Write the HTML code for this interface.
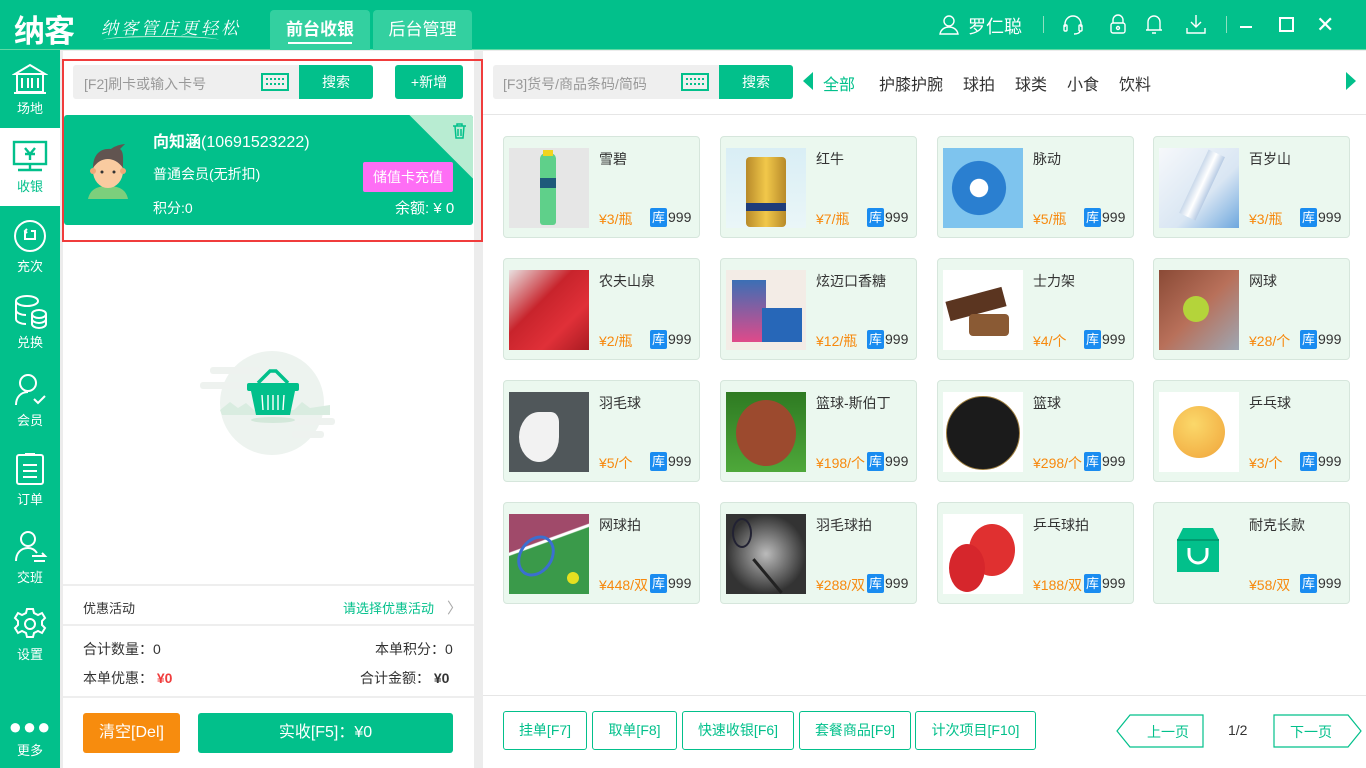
<!DOCTYPE html>
<html><head><meta charset="utf-8"><style>
*{margin:0;padding:0;box-sizing:border-box}
body{width:1366px;height:768px;overflow:hidden;font-family:"Liberation Sans","Noto Sans CJK SC",sans-serif;background:#ececec;position:relative;font-size:14px;color:#333}
.abs{position:absolute}
.top{left:0;top:0;width:1366px;height:50px;background:#02c08b;border-bottom:1px solid #5fd9a4}
.side{left:0;top:50px;width:60px;height:718px;background:#02c08b}
.nav{position:absolute;left:0;width:60px;text-align:center;color:#fff;font-size:13px}
.nav svg{display:block;margin:0 auto 2px}
.left{left:63px;top:51px;width:411px;height:717px;background:#fff}
.right{left:483px;top:51px;width:883px;height:717px;background:#fff}
.btn{position:absolute;background:#02c08b;color:#fff;text-align:center;border-radius:3px}
.card{position:absolute;width:197px;height:102px;background:#ebf8ef;border:1px solid #d6e6dc;border-radius:4px}
.card .img{position:absolute;left:5px;top:11px;width:80px;height:80px;overflow:hidden}
.card .nm{position:absolute;left:95px;top:12px;font-size:14px;color:#333}
.card .pr{position:absolute;left:95px;top:72px;font-size:14px;color:#f7890e}
.card .ku{position:absolute;left:146px;top:71px;width:17px;height:19px;background:#1a8cf0;color:#fff;font-size:13px;text-align:center;line-height:19px;border-radius:2px}
.card .st{position:absolute;left:164px;top:72px;font-size:14px;color:#333}
.bb{position:absolute;top:711px;height:39px;border:1px solid #02c08b;border-radius:3px;color:#02c08b;font-size:14px;text-align:center;line-height:37px;background:#fff}
.cat{position:absolute;top:71px;font-size:16px;color:#333}
</style></head><body>
<div class="abs top"></div>
<div class="abs" style="left:14px;top:6px;font-size:31px;font-weight:bold;color:#fff;letter-spacing:-1px">纳客</div>
<div class="abs" style="left:101px;top:14px;font-size:17px;color:#fff;font-style:italic;letter-spacing:3px;font-family:'Liberation Serif','Noto Serif CJK SC',serif">纳客管店更轻松</div>
<div class="abs" style="left:103px;top:36px;width:116px;height:8px;border-top:1px solid #c9f0e0;border-radius:50% 50% 0 0"></div>
<div class="abs" style="left:270px;top:10px;width:100px;height:40px;background:#33d0a0;border-radius:4px 4px 0 0;color:#fff;font-size:17px;font-weight:bold;text-align:center;line-height:40px">前台收银</div>
<div class="abs" style="left:288px;top:42px;width:64px;height:2px;background:#fff"></div>
<div class="abs" style="left:373px;top:10px;width:99px;height:40px;background:#33d0a0;border-radius:4px 4px 0 0;color:#fff;font-size:17px;text-align:center;line-height:40px">后台管理</div>
<svg class="abs" style="left:938px;top:14px" width="22" height="22" viewBox="0 0 22 22" fill="none" stroke="#fff" stroke-width="1.4"><circle cx="11" cy="7" r="5"/><path d="M2 20c1-5 5-7 9-7s8 2 9 7z"/></svg>
<div class="abs" style="left:968px;top:13px;color:#fff;font-size:18px">罗仁聪</div>
<div class="abs" style="left:1043px;top:16px;width:1px;height:17px;background:#8ee0c0"></div>
<svg class="abs" style="left:1062px;top:14px" width="22" height="22" viewBox="0 0 22 22" fill="none" stroke="#fff" stroke-width="1.4"><path d="M3 13V10a8 8 0 0116 0v3"/><rect x="2" y="11" width="3" height="6" rx="1"/><rect x="17" y="11" width="3" height="6" rx="1"/><path d="M18 17c0 2-3 3-6 3"/></svg>
<svg class="abs" style="left:1108px;top:13px" width="20" height="22" viewBox="0 0 20 22" fill="none" stroke="#fff" stroke-width="1.4"><path d="M5 10V7a5 5 0 0110 0v3"/><rect x="3" y="10" width="14" height="10" rx="2"/><circle cx="10" cy="15" r="1.5"/></svg>
<svg class="abs" style="left:1145px;top:13px" width="18" height="22" viewBox="0 0 18 22" fill="none" stroke="#fff" stroke-width="1.4"><path d="M3 17V9a6 6 0 0112 0v8zM1 17h16M7 20h4"/></svg>
<svg class="abs" style="left:1185px;top:13px" width="22" height="22" viewBox="0 0 22 22" fill="none" stroke="#fff" stroke-width="1.4"><path d="M11 2v12M6 9l5 5 5-5M2 15v5h18v-5"/></svg>
<div class="abs" style="left:1226px;top:16px;width:1px;height:17px;background:#8ee0c0"></div>
<div class="abs" style="left:1240px;top:26px;width:12px;height:2px;background:#fff"></div>
<div class="abs" style="left:1279px;top:17px;width:15px;height:15px;border:2px solid #fff"></div>
<div class="abs" style="left:1316px;top:12px;color:#fff;font-size:22px">✕</div>

<div class="abs side"></div>
<div class="nav" style="top:62px"><svg width="36" height="34" viewBox="0 0 36 34" fill="none" stroke="#fff" stroke-width="2"><path d="M3 12 18 3l15 9zM5 12v18h26V12M2 31h32M10 16v10M16 16v10M20 16v10M26 16v10"/></svg>场地</div>
<div class="abs" style="left:0;top:128px;width:60px;height:78px;background:#fff"></div>
<div class="nav" style="top:140px;color:#02c08b"><svg width="36" height="34" viewBox="0 0 36 34" fill="none" stroke="#02c08b" stroke-width="2.4"><rect x="2" y="2" width="32" height="22"/><path d="M18 24v6M6 30h24M13 8l5 6 5-6M13 14h10M18 14v6"/></svg>收银</div>
<div class="nav" style="top:218px"><svg width="36" height="36" viewBox="0 0 36 36" fill="none" stroke="#fff" stroke-width="2"><circle cx="18" cy="18" r="15"/><path d="M13 13v8h10v-8h-4M15 11l-2 2 2 2"/></svg>充次</div>
<div class="nav" style="top:294px"><svg width="36" height="36" viewBox="0 0 36 36" fill="none" stroke="#fff" stroke-width="2"><ellipse cx="15" cy="7" rx="11" ry="5"/><path d="M4 7v18c0 3 5 5 10 5M4 16c0 3 5 5 10 5"/><ellipse cx="27" cy="20" rx="7" ry="4"/><path d="M20 20v10c0 2 3 4 7 4s7-2 7-4V20M20 25c0 2 3 4 7 4s7-2 7-4"/></svg>兑换</div>
<div class="nav" style="top:372px"><svg width="36" height="36" viewBox="0 0 36 36" fill="none" stroke="#fff" stroke-width="2"><circle cx="16" cy="11" r="8"/><path d="M4 33c0-8 5-13 12-13M22 27l4 4 7-7"/></svg>会员</div>
<div class="nav" style="top:451px"><svg width="36" height="36" viewBox="0 0 36 36" fill="none" stroke="#fff" stroke-width="2"><rect x="5" y="4" width="26" height="29" rx="2"/><path d="M13 3h10M11 14h14M11 20h14M11 26h14"/></svg>订单</div>
<div class="nav" style="top:529px"><svg width="36" height="36" viewBox="0 0 36 36" fill="none" stroke="#fff" stroke-width="2"><circle cx="16" cy="10" r="7"/><path d="M4 32c0-8 5-13 12-13 4 0 7 2 9 5M20 27h13l-3-3M22 32h11"/></svg>交班</div>
<div class="nav" style="top:606px"><svg width="36" height="36" viewBox="0 0 36 36" fill="none" stroke="#fff" stroke-width="2"><path d="M15 3h6l1 4 4 2 4-2 3 5-3 3v4l3 3-3 5-4-2-4 2-1 4h-6l-1-4-4-2-4 2-3-5 3-3v-4L3 12l3-5 4 2 4-2z"/><circle cx="18" cy="18" r="5"/></svg>设置</div>
<div class="nav" style="top:722px"><div style="font-size:22px;line-height:10px;letter-spacing:1px">●●●</div><div style="margin-top:8px">更多</div></div>

<div class="abs left"></div>
<div class="abs" style="left:62px;top:59px;width:421px;height:183px;border:2px solid #f03c3c"></div>
<div class="abs" style="left:73px;top:65px;width:226px;height:34px;background:#efefef;border-radius:3px 0 0 3px"></div>
<div class="abs" style="left:84px;top:74px;color:#999;font-size:14px">[F2]刷卡或输入卡号</div>
<svg class="abs" style="left:261px;top:73px" width="28" height="18" viewBox="0 0 28 18" fill="none" stroke="#02c08b" stroke-width="2"><rect x="1" y="1" width="26" height="16"/><path d="M5 6h18M5 11h18" stroke-dasharray="2 2"/></svg>
<div class="btn" style="left:299px;top:65px;width:74px;height:34px;line-height:34px;border-radius:0 3px 3px 0">搜索</div>
<div class="btn" style="left:395px;top:65px;width:68px;height:34px;line-height:34px">+新增</div>
<div class="abs" style="left:64px;top:115px;width:409px;height:110px;background:#02c08b;border-radius:3px;overflow:hidden">
 <div style="position:absolute;right:-45px;top:-45px;width:90px;height:90px;background:#b8ecd2;transform:rotate(45deg)"></div>
</div>
<svg class="abs" style="left:452px;top:123px" width="15" height="16" viewBox="0 0 15 16" fill="none" stroke="#02c08b" stroke-width="1.5"><path d="M1 3h13M5 3V1h5v2M3 3l1 12h7l1-12M6 6v7M9 6v7"/></svg>
<svg class="abs" style="left:86px;top:141px" width="44" height="58" viewBox="0 0 44 58"><path d="M2 58c2-10 10-13 20-13s18 3 20 13z" fill="#7ccf7c"/><ellipse cx="22" cy="30" rx="15" ry="17" fill="#f9cba0"/><circle cx="7" cy="30" r="3" fill="#f0a878"/><circle cx="37" cy="30" r="3" fill="#f0a878"/><path d="M7 27c0-14 8-20 18-19 5-4 13-5 14-5-2 2-4 4-5 5 4 3 3 10 3 19-4-6-10-9-15-9-6 0-11 3-15 9z" fill="#615450"/><circle cx="16" cy="31" r="1.5" fill="#333"/><circle cx="28" cy="31" r="1.5" fill="#333"/></svg>
<div class="abs" style="left:153px;top:128px;color:#fff;font-size:16px"><b>向知涵</b>(10691523222)</div>
<div class="abs" style="left:153px;top:164px;color:#fff;font-size:14px">普通会员(无折扣)</div>
<div class="abs" style="left:363px;top:162px;width:90px;height:30px;background:#fe6ef5;color:#fff;font-size:14px;text-align:center;line-height:30px;border-radius:2px">储值卡充值</div>
<div class="abs" style="left:153px;top:198px;color:#fff;font-size:14px">积分:0</div>
<div class="abs" style="left:395px;top:197px;color:#fff;font-size:15px">余额: ¥ 0</div>

<svg class="abs" style="left:200px;top:350px" width="136" height="108" viewBox="0 0 136 108"><circle cx="72" cy="53" r="52" fill="#edf3ef"/><rect x="10" y="17" width="50" height="7" rx="3" fill="#eef2ef"/><rect x="0" y="32" width="62" height="7" rx="3" fill="#eef2ef"/><rect x="93" y="68" width="42" height="7" rx="3" fill="#eef2ef"/><rect x="92" y="81" width="32" height="7" rx="3" fill="#eef2ef"/><path d="M20 60l10-8 8 6 8-5 8 7 40 0 8-8 8 6 20-3v10H22z" fill="#d9ece0"/><ellipse cx="73" cy="70" rx="22" ry="3" fill="#d3e8da"/><path d="M58 33l12-12h6l12 12" fill="none" stroke="#02c08b" stroke-width="3.5"/><rect x="47" y="33" width="52" height="8" rx="2" fill="#02c08b"/><path d="M51 41h44l-5 24H56z" fill="#02c08b"/><path d="M62 45l1 15M68 45v15M73 45v15M78 45v15M84 45l-1 15" stroke="#fff" stroke-width="1.4"/></svg>

<div class="abs" style="left:63px;top:584px;width:411px;height:2px;background:#eee"></div>
<div class="abs" style="left:83px;top:598px;font-size:13px;color:#333">优惠活动</div>
<div class="abs" style="left:343px;top:598px;font-size:13px;color:#02c08b">请选择优惠活动</div>
<div class="abs" style="left:447px;top:597px;font-size:15px;color:#aaa">〉</div>
<div class="abs" style="left:63px;top:624px;width:411px;height:2px;background:#eee"></div>
<div class="abs" style="left:83px;top:639px;font-size:14px;color:#333">合计数量：0</div>
<div class="abs" style="left:375px;top:639px;font-size:14px;color:#333">本单积分：0</div>
<div class="abs" style="left:83px;top:668px;font-size:14px;color:#333">本单优惠： <b style="color:#f03c3c">¥0</b></div>
<div class="abs" style="left:360px;top:668px;font-size:14px;color:#333">合计金额： <b>¥0</b></div>
<div class="abs" style="left:63px;top:696px;width:411px;height:2px;background:#eee"></div>
<div class="abs" style="left:83px;top:713px;width:97px;height:40px;background:#f78c0e;border-radius:3px;color:#fff;font-size:16px;text-align:center;line-height:40px">清空[Del]</div>
<div class="btn" style="left:198px;top:713px;width:255px;height:40px;line-height:40px;font-size:16px">实收[F5]：¥0</div>

<div class="abs right"></div>
<div class="abs" style="left:493px;top:65px;width:226px;height:34px;background:#efefef;border-radius:3px 0 0 3px"></div>
<div class="abs" style="left:503px;top:74px;color:#999;font-size:14px">[F3]货号/商品条码/简码</div>
<svg class="abs" style="left:681px;top:73px" width="28" height="18" viewBox="0 0 28 18" fill="none" stroke="#02c08b" stroke-width="2"><rect x="1" y="1" width="26" height="16"/><path d="M5 6h18M5 11h18" stroke-dasharray="2 2"/></svg>
<div class="btn" style="left:719px;top:65px;width:74px;height:34px;line-height:34px;border-radius:0 3px 3px 0">搜索</div>
<div class="abs" style="left:803px;top:72px;width:0;height:0;border-top:9px solid transparent;border-bottom:9px solid transparent;border-right:10px solid #02c08b"></div>
<div class="cat" style="left:823px;color:#02c08b">全部</div>
<div class="cat" style="left:879px">护膝护腕</div>
<div class="cat" style="left:963px">球拍</div>
<div class="cat" style="left:1015px">球类</div>
<div class="cat" style="left:1067px">小食</div>
<div class="cat" style="left:1119px">饮料</div>
<div class="abs" style="left:1346px;top:72px;width:0;height:0;border-top:9px solid transparent;border-bottom:9px solid transparent;border-left:10px solid #02c08b"></div>
<div class="abs" style="left:483px;top:114px;width:883px;height:1px;background:#e6e6e6"></div>

<div class="card" style="left:503px;top:136px"><div class="img" style="background:#e6e6e6"><div style="position:absolute;left:31px;top:5px;width:16px;height:72px;background:#5fd08a;border-radius:6px 6px 3px 3px"></div><div style="position:absolute;left:34px;top:2px;width:10px;height:6px;background:#f1d420"></div><div style="position:absolute;left:31px;top:30px;width:16px;height:10px;background:#1e5a7a"></div></div><div class="nm">雪碧</div><div class="pr">¥3/瓶</div><div class="ku">库</div><div class="st">999</div></div>
<div class="card" style="left:720px;top:136px"><div class="img" style="background:linear-gradient(#d9eef5,#eaf6f8)"><div style="position:absolute;left:20px;top:9px;width:40px;height:70px;background:linear-gradient(90deg,#b88a2a,#f1c84a,#b88a2a);border-radius:4px"></div><div style="position:absolute;left:20px;top:55px;width:40px;height:8px;background:#1f3c7a"></div></div><div class="nm">红牛</div><div class="pr">¥7/瓶</div><div class="ku">库</div><div class="st">999</div></div>
<div class="card" style="left:937px;top:136px"><div class="img" style="background:radial-gradient(circle at 45% 50%,#fff 0 15%,#2a7fd0 16% 45%,#7ec4ee 46%)"></div><div class="nm">脉动</div><div class="pr">¥5/瓶</div><div class="ku">库</div><div class="st">999</div></div>
<div class="card" style="left:1153px;top:136px"><div class="img" style="background:linear-gradient(135deg,#f6f8fb,#d9e6f3 60%,#6ea7de)"><div style="position:absolute;left:34px;top:2px;width:18px;height:70px;background:linear-gradient(90deg,#c9d8ea,#fff,#b7cbe4);transform:rotate(25deg)"></div></div><div class="nm">百岁山</div><div class="pr">¥3/瓶</div><div class="ku">库</div><div class="st">999</div></div>
<div class="card" style="left:503px;top:258px"><div class="img" style="background:linear-gradient(135deg,#e8e0e0,#c8242c 40%,#e03038 70%,#a91b22)"></div><div class="nm">农夫山泉</div><div class="pr">¥2/瓶</div><div class="ku">库</div><div class="st">999</div></div>
<div class="card" style="left:720px;top:258px"><div class="img" style="background:#f3ece6"><div style="position:absolute;left:6px;top:10px;width:34px;height:62px;background:linear-gradient(#3b6fb5,#e04a8a)"></div><div style="position:absolute;left:36px;top:38px;width:40px;height:34px;background:#2767b8"></div></div><div class="nm">炫迈口香糖</div><div class="pr">¥12/瓶</div><div class="ku">库</div><div class="st">999</div></div>
<div class="card" style="left:937px;top:258px"><div class="img" style="background:#fff"><div style="position:absolute;left:4px;top:24px;width:58px;height:20px;background:#5b3520;transform:rotate(-15deg)"></div><div style="position:absolute;left:26px;top:44px;width:40px;height:22px;background:#8a5a34;border-radius:4px"></div></div><div class="nm">士力架</div><div class="pr">¥4/个</div><div class="ku">库</div><div class="st">999</div></div>
<div class="card" style="left:1153px;top:258px"><div class="img" style="background:linear-gradient(135deg,#8a4a36,#b8705a 50%,#9ea7b3)"><div style="position:absolute;left:24px;top:26px;width:26px;height:26px;border-radius:50%;background:#b4d43a"></div></div><div class="nm">网球</div><div class="pr">¥28/个</div><div class="ku">库</div><div class="st">999</div></div>
<div class="card" style="left:503px;top:380px"><div class="img" style="background:#50575a"><div style="position:absolute;left:10px;top:20px;width:40px;height:50px;background:#f2f2f2;border-radius:50% 20% 50% 50%"></div></div><div class="nm">羽毛球</div><div class="pr">¥5/个</div><div class="ku">库</div><div class="st">999</div></div>
<div class="card" style="left:720px;top:380px"><div class="img" style="background:linear-gradient(#2e7a22,#4ea83a)"><div style="position:absolute;left:10px;top:8px;width:60px;height:66px;border-radius:50%;background:#9c4a2e"></div></div><div class="nm">篮球-斯伯丁</div><div class="pr">¥198/个</div><div class="ku">库</div><div class="st">999</div></div>
<div class="card" style="left:937px;top:380px"><div class="img" style="background:#fff"><div style="position:absolute;left:3px;top:4px;width:74px;height:74px;border-radius:50%;background:#1b1b1b;border:1px solid #a08040"></div></div><div class="nm">篮球</div><div class="pr">¥298/个</div><div class="ku">库</div><div class="st">999</div></div>
<div class="card" style="left:1153px;top:380px"><div class="img" style="background:#fff"><div style="position:absolute;left:14px;top:14px;width:52px;height:52px;border-radius:50%;background:radial-gradient(circle at 40% 35%,#fbd86a,#f0a43a)"></div></div><div class="nm">乒乓球</div><div class="pr">¥3/个</div><div class="ku">库</div><div class="st">999</div></div>
<div class="card" style="left:503px;top:502px"><div class="img" style="background:linear-gradient(160deg,#a04a6a 0 35%,#fff 36% 38%,#3a9a4a 39%)"><div style="position:absolute;left:10px;top:20px;width:34px;height:44px;border:3px solid #3b6fd0;border-radius:50%;transform:rotate(35deg)"></div><div style="position:absolute;left:58px;top:58px;width:12px;height:12px;border-radius:50%;background:#e6e020"></div></div><div class="nm">网球拍</div><div class="pr">¥448/双</div><div class="ku">库</div><div class="st">999</div></div>
<div class="card" style="left:720px;top:502px"><div class="img" style="background:radial-gradient(circle at 50% 50%,#bbb,#333 70%)"><div style="position:absolute;left:6px;top:4px;width:20px;height:30px;border:2px solid #223;border-radius:50%"></div><div style="position:absolute;left:40px;top:40px;width:3px;height:44px;background:#222;transform:rotate(-40deg)"></div></div><div class="nm">羽毛球拍</div><div class="pr">¥288/双</div><div class="ku">库</div><div class="st">999</div></div>
<div class="card" style="left:937px;top:502px"><div class="img" style="background:#fff"><div style="position:absolute;left:26px;top:10px;width:46px;height:52px;border-radius:50%;background:#e03030"></div><div style="position:absolute;left:6px;top:30px;width:36px;height:48px;border-radius:50%;background:#d6262c"></div></div><div class="nm">乒乓球拍</div><div class="pr">¥188/双</div><div class="ku">库</div><div class="st">999</div></div>
<div class="card" style="left:1153px;top:502px"><div class="img" style="background:#ebf8ef"><svg width="80" height="80" viewBox="0 0 80 80"><path d="M24 14h30l6 12v32H18V26z" fill="#02c08b"/><path d="M18 26h42" stroke="#019b70" stroke-width="2"/><path d="M30 34v6a9 9 0 0018 0v-6" fill="none" stroke="#fff" stroke-width="3"/></svg></div><div class="nm">耐克长款</div><div class="pr">¥58/双</div><div class="ku">库</div><div class="st">999</div></div>

<div class="abs" style="left:483px;top:695px;width:883px;height:1px;background:#e6e6e6"></div>
<div class="bb" style="left:503px;width:84px">挂单[F7]</div>
<div class="bb" style="left:592px;width:85px">取单[F8]</div>
<div class="bb" style="left:682px;width:112px">快速收银[F6]</div>
<div class="bb" style="left:799px;width:112px">套餐商品[F9]</div>
<div class="bb" style="left:915px;width:121px">计次项目[F10]</div>
<svg class="abs" style="left:1116px;top:714px" width="90" height="34" viewBox="0 0 90 34"><path d="M14 1H87V33H14L1 17z" fill="#fff" stroke="#02c08b" stroke-width="1.2"/><text x="52" y="23" text-anchor="middle" font-size="14" fill="#02c08b" font-family="Liberation Sans,Noto Sans CJK SC,sans-serif">上一页</text></svg>
<div class="abs" style="left:1228px;top:722px;font-size:14px;color:#333">1/2</div>
<svg class="abs" style="left:1273px;top:714px" width="90" height="34" viewBox="0 0 90 34"><path d="M1 1H75L88 17 75 33H1z" fill="#fff" stroke="#02c08b" stroke-width="1.2"/><text x="38" y="23" text-anchor="middle" font-size="14" fill="#02c08b" font-family="Liberation Sans,Noto Sans CJK SC,sans-serif">下一页</text></svg>
</body></html>
